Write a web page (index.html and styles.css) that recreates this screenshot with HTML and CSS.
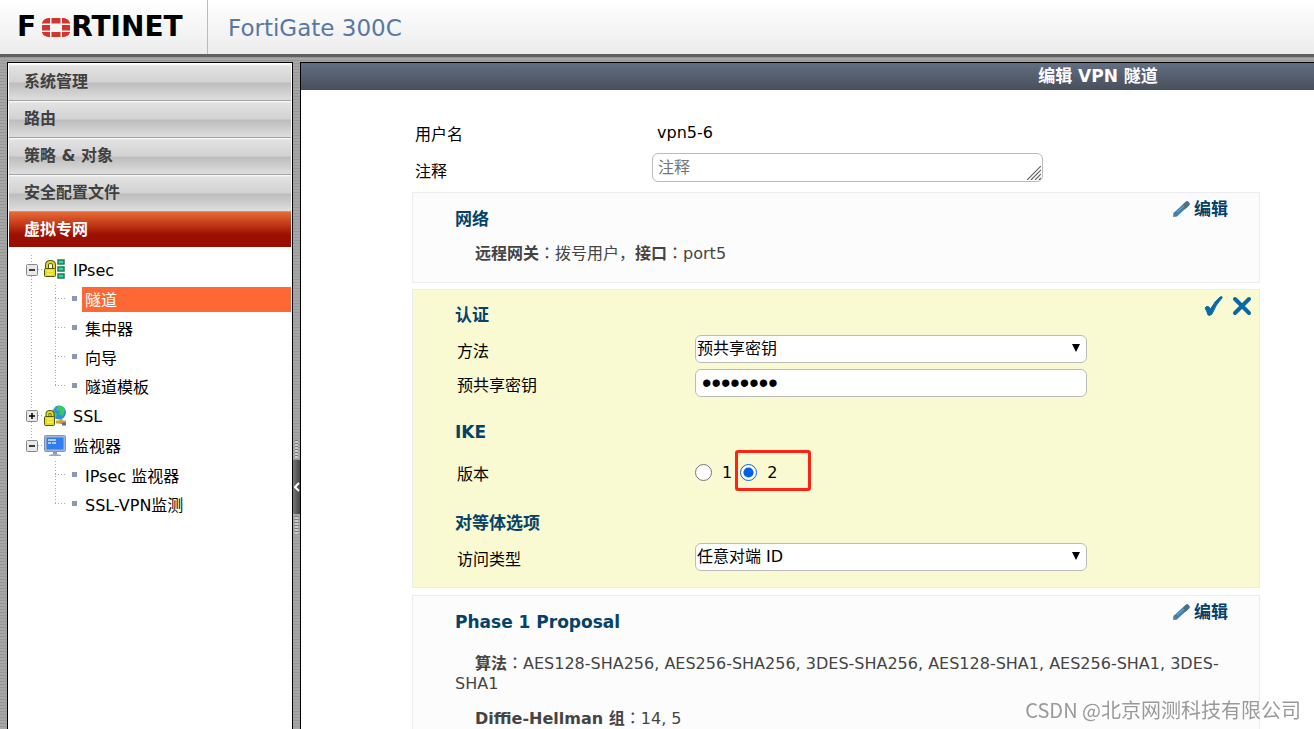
FILE: index.html
```html
<!DOCTYPE html>
<html lang="zh-CN">
<head>
<meta charset="utf-8">
<title>FortiGate 300C</title>
<link rel="stylesheet" href="styles.css">
</head>
<body>
<header class="topbar">
  <div class="logo" aria-label="Fortinet">
    <span>F</span>
    <svg class="logo-mark" viewBox="0 0 28 19" aria-hidden="true">
      <path fill="#d23530" d="M0 5.500V5Q1 1 6 0H8V5.500zM9.500 0h9v5.500h-9zM20 0h2q5 1 6 5v.5H20zM0 7h8v5.500H0zM20 7h8v5.500h-8zM0 14h8v5H6Q1 18 0 14.500zM9.500 14h9v5h-9zM20 14h8v.5q-1 3.500-6 4.500h-2z"/>
    </svg>
    <span>RTINET</span>
  </div>
  <h1 class="model">FortiGate 300C</h1>
</header>
<div class="workspace">
  <nav class="sidebar">
    <div class="menu">
      <button class="menu-item">系统管理</button>
      <button class="menu-item">路由</button>
      <button class="menu-item">策略 &amp; 对象</button>
      <button class="menu-item">安全配置文件</button>
      <button class="menu-item active">虚拟专网</button>
    </div>
    <ul class="tree">
      <li class="branch">
        <div class="node">
          <svg class="toggle" viewBox="0 0 12 12"><rect x=".5" y=".5" width="11" height="11" rx="1" fill="#e9e9e9" stroke="#888"/><path d="M3 6h6" stroke="#000" stroke-width="1.500"/></svg>
          <svg class="node-icon" viewBox="0 0 22 22"><path d="M3 10V6q0-3 3.500-3T10 6v4" fill="none" stroke="#59590a" stroke-width="4"/><path d="M3 10V6q0-3 3.500-3T10 6v4" fill="none" stroke="#dcd82c" stroke-width="2"/><rect x=".5" y="9.500" width="11" height="8" rx="1" fill="#e2dc19" stroke="#55520a"/><path d="M3 12h6M3 15h6" stroke="#fff7a0"/><g fill="#25dcb0" stroke="#26784c" stroke-width="1.500"><rect x="14" y="1" width="6" height="4"/><rect x="14" y="8" width="6" height="4"/><rect x="14" y="15" width="6" height="4"/></g></svg>
          <a href="#">IPsec</a>
        </div>
        <ul class="leaves">
          <li><a href="#" class="current">隧道</a></li>
          <li><a href="#">集中器</a></li>
          <li><a href="#">向导</a></li>
          <li><a href="#">隧道模板</a></li>
        </ul>
      </li>
      <li class="branch">
        <div class="node">
          <svg class="toggle" viewBox="0 0 12 12"><rect x=".5" y=".5" width="11" height="11" rx="1" fill="#e9e9e9" stroke="#888"/><path d="M3 6h6M6 3v6" stroke="#000" stroke-width="1.500"/></svg>
          <svg class="node-icon" viewBox="0 0 22 22"><circle cx="15" cy="7.500" r="7" fill="#2a8fe0"/><path d="M14 1q5-1 7 4l-2 6-4-2 1-3-4-1zM9 5l4 4-1 4-3-3z" fill="#3cc95c"/><path d="M11 2q-3 2-3 5" stroke="#bdeaff" stroke-width="1.500" fill="none"/><path d="M12 17h10M17 14v5" stroke="#d3a326" stroke-width="3"/><path d="M18 19h4" stroke="#596f98" stroke-width="3"/><path d="M3.500 12V9q0-2 2.500-2t2.500 2v3" fill="none" stroke="#59590a" stroke-width="4"/><path d="M3.500 12V9q0-2 2.500-2t2.500 2v3" fill="none" stroke="#e6df1c" stroke-width="2"/><rect x=".5" y="11.500" width="10" height="9" rx="1" fill="#e2dc19" stroke="#55520a"/><path d="M3 14h6M3 17h6" stroke="#fff7a0"/></svg>
          <a href="#">SSL</a>
        </div>
      </li>
      <li class="branch last">
        <div class="node">
          <svg class="toggle" viewBox="0 0 12 12"><rect x=".5" y=".5" width="11" height="11" rx="1" fill="#e9e9e9" stroke="#888"/><path d="M3 6h6" stroke="#000" stroke-width="1.500"/></svg>
          <svg class="node-icon" viewBox="0 0 22 22"><rect x=".5" y=".5" width="21" height="16" rx="1" fill="#a9b5d2" stroke="#8994b5"/><rect x="2.500" y="2.500" width="17" height="12" fill="#2f7df0"/><path d="M4 5h8M4 8h3M8 8h4" stroke="#d7e8ff" stroke-width="1.500"/><path d="M9 17h4v2H9z" fill="#8e9ab8"/><path d="M5 20q6-2 12 0v1H5z" fill="#9ca7c2"/></svg>
          <a href="#">监视器</a>
        </div>
        <ul class="leaves">
          <li><a href="#">IPsec 监视器</a></li>
          <li><a href="#">SSL-VPN监测</a></li>
        </ul>
      </li>
    </ul>
  </nav>
  <div class="splitter">
    <span class="grip"></span>
    <button class="collapse" aria-label="收起"><svg viewBox="0 0 6 10"><path d="M5 1L1 5l4 4" fill="none" stroke="#fff" stroke-width="2"/></svg></button>
    <span class="grip"></span>
  </div>
  <main class="content">
    <h2 class="page-title">编辑 VPN 隧道</h2>
    <form class="form">
      <div class="general">
        <span class="caption">用户名</span>
        <span class="value">vpn5-6</span>
        <label class="caption" for="comment">注释</label>
        <div class="comment-box">
          <textarea id="comment" rows="1" placeholder="注释"></textarea>
          <svg class="resizer" viewBox="0 0 14 14"><path d="M0 14L14 0M4 14L14 4M8 14l6-6M12 14l2-2" stroke="#666" stroke-width="1.200"/></svg>
        </div>
      </div>

      <section class="card">
        <div class="card-head">
          <h3>网络</h3>
          <button type="button" class="edit"><svg viewBox="0 0 17 16"><path d="M3 13L14 3" stroke="#3f82b2" stroke-width="5" stroke-linecap="round"/><path d="M12 5l2-2" stroke="#4b7189" stroke-width="5" stroke-linecap="round"/><path d="M0 16l1-5 4 4z" fill="#537f9b"/><path d="M4 11l7-6" stroke="#76b0d2"/></svg>编辑</button>
        </div>
        <p class="summary"><b>远程网关</b><span class="colon" lang="zh-TW">：</span>拨号用户，<b>接口</b><span class="colon" lang="zh-TW">：</span>port5</p>
      </section>

      <section class="card editing">
        <div class="card-head">
          <h3>认证</h3>
          <div class="confirm">
            <button type="button" aria-label="确定"><svg viewBox="0 0 20 20"><path d="M1 12q2-3 4-1l1.500 2Q11 5 16 1q3-1 2 1-6 6-10 16-2 2-4 1-1-4-3-7z" fill="#0869a8" stroke="#0869a8"/></svg></button>
            <button type="button" aria-label="取消"><svg viewBox="0 0 20 20"><path d="M3 3l14 14M17 3L3 17" stroke="#0869a8" stroke-width="4" stroke-linecap="round"/></svg></button>
          </div>
        </div>
        <div class="row">
          <label for="method">方法</label>
          <div class="select"><select id="method"><option>预共享密钥</option></select></div>
        </div>
        <div class="row">
          <label for="psk">预共享密钥</label>
          <input id="psk" type="password" value="12345678">
        </div>
        <h3>IKE</h3>
        <div class="row version">
          <span>版本</span>
          <div class="radios">
            <label><input type="radio" name="ike">1</label>
            <label class="marked"><input type="radio" name="ike" checked>2</label>
          </div>
        </div>
        <h3>对等体选项</h3>
        <div class="row">
          <label for="peer">访问类型</label>
          <div class="select"><select id="peer"><option>任意对端 ID</option></select></div>
        </div>
      </section>

      <section class="card proposal">
        <div class="card-head">
          <h3>Phase 1 Proposal</h3>
          <button type="button" class="edit"><svg viewBox="0 0 17 16"><path d="M3 13L14 3" stroke="#3f82b2" stroke-width="5" stroke-linecap="round"/><path d="M12 5l2-2" stroke="#4b7189" stroke-width="5" stroke-linecap="round"/><path d="M0 16l1-5 4 4z" fill="#537f9b"/><path d="M4 11l7-6" stroke="#76b0d2"/></svg>编辑</button>
        </div>
        <p class="summary"><b>算法</b><span class="colon" lang="zh-TW">：</span>AES128-SHA256, AES256-SHA256, 3DES-SHA256, AES128-SHA1, AES256-SHA1, 3DES-SHA1</p>
        <p class="summary"><b>Diffie-Hellman 组</b><span class="colon" lang="zh-TW">：</span>14, 5</p>
      </section>
    </form>
  </main>
</div>
<div class="watermark">CSDN @北京网测科技有限公司</div>
</body>
</html>
```
FILE: styles.css
```css
* { box-sizing: border-box; }
body {
  margin: 0;
  height: 100vh;
  display: flex;
  flex-direction: column;
  overflow: hidden;
  font: 16px/20px "DejaVu Sans", "Noto Sans CJK SC", sans-serif;
  color: #000;
  background: repeating-linear-gradient(#979797 0 1px, #a6a6a6 1px 3px);
}
button, input, select, textarea { font: inherit; color: inherit; margin: 0; }
button { background: none; border: 0; padding: 0; cursor: pointer; }
a { color: inherit; text-decoration: none; }
ul { list-style: none; margin: 0; padding: 0; }
h1, h2, h3, p { margin: 0; }

.topbar {
  flex: none;
  display: flex;
  height: 57px;
  background: linear-gradient(#fff, #ececec);
  border-bottom: 3px solid #606060;
}
.logo {
  display: flex;
  align-items: center;
  width: 208px;
  padding-left: 17px;
  border-right: 1px solid #bbb;
  font-size: 28px;
  font-weight: bold;
}
.logo-mark { width: 28px; height: 19px; margin: 0 1px 0 6px; }
.model {
  padding-left: 20px;
  font-size: 23px;
  font-weight: normal;
  line-height: 56px;
  color: #5579a3;
}

.workspace { flex: 1; display: flex; min-height: 0; padding: 5px 0 0 7px; }
.sidebar {
  flex: none;
  width: 286px;
  padding: 1px 1px 0;
  background: #fff;
  border: 1px solid #000;
  border-bottom: 0;
}
.menu { display: flex; flex-direction: column; }
.menu-item {
  height: 37px;
  padding-left: 15px;
  text-align: left;
  font-weight: bold;
  color: #404040;
  border-bottom: 1px solid #a3a3a3;
  background: linear-gradient(#fff 0, #e2e2e2 2px, #d2d2d2 50%, #bdbdbd 53%, #dedede);
}
.menu-item.active {
  height: 35px;
  color: #fff;
  border: 0;
  background: linear-gradient(#e66a38, #c8401c 30%, #9b1000 65%, #960d00);
}
.tree { padding-top: 8px; }
.branch {
  padding-left: 17px;
  background: repeating-linear-gradient(#aaa 0 1px, #fff 1px 3px) 22px 0 / 1px 100% no-repeat;
}
.branch.last { background-size: 1px 12px; }
.node {
  display: flex;
  align-items: center;
  height: 30px;
  background: repeating-linear-gradient(90deg, #aaa 0 1px, #fff 1px 3px) 12px 14px / 6px 1px no-repeat;
}
.node a { padding-top: 2px; }
.toggle { width: 12px; height: 12px; margin-right: 6px; }
.node-icon { width: 22px; height: 22px; margin-right: 7px; }
.leaves { margin-left: 29px; }
.leaves li {
  height: 29px;
  padding: 2px 0 2px 27px;
  background:
    linear-gradient(#8d97b2, #8d97b2) 17px 11px / 5px 5px no-repeat,
    repeating-linear-gradient(#aaa 0 1px, transparent 1px 3px) 0 0 / 1px 100% no-repeat,
    repeating-linear-gradient(90deg, #aaa 0 1px, transparent 1px 3px) 0 13px / 12px 1px no-repeat;
}
.leaves li:last-child { background-size: 5px 5px, 1px 14px, 12px 1px; }
.leaves a { display: block; padding: 2px 0 0 3px; line-height: 23px; }
.leaves .current { color: #fff; background: #ff6735; }

.splitter {
  flex: none;
  width: 7px;
  display: flex;
  flex-direction: column;
  align-items: center;
  padding-top: 376px;
}
.grip { width: 3px; height: 18px; margin: 2px 0; background: repeating-linear-gradient(#777 0 1px, #ccc 1px 3px); }
.collapse {
  width: 7px;
  height: 54px;
  display: flex;
  align-items: center;
  justify-content: center;
  background: linear-gradient(90deg, #777, #444);
}
.collapse svg { width: 6px; height: 10px; }

.content {
  flex: 1;
  min-width: 0;
  overflow: hidden;
  background: #fff;
  border: solid #000;
  border-width: 1px 0 0 1px;
}
.page-title {
  padding-left: 581px;
  text-align: center;
  white-space: nowrap;
  font-size: 17px;
  line-height: 27px;
  color: #fff;
  background: linear-gradient(#626e82, #484f5b);
}
.form { padding: 30px 54px 0 111px; }
.general {
  display: grid;
  grid-template-columns: 240px 391px;
  row-gap: 7px;
  margin-bottom: 5px;
}
.caption { padding-left: 3px; line-height: 30px; }
.value { padding-left: 5px; line-height: 26px; }
.comment-box { position: relative; display: flex; margin-top: -4px; height: 29px; }
.comment-box textarea {
  width: 100%;
  padding: 4px 5px;
  line-height: 20px;
  border: 1px solid #bbb;
  border-radius: 6px;
  resize: none;
  overflow: hidden;
}
.comment-box textarea::placeholder { color: #757575; }
.resizer { position: absolute; right: 2px; bottom: 2px; width: 14px; height: 14px; }

.card {
  margin-bottom: 6px;
  padding: 6px 31px 18px 42px;
  background: #fcfcfc;
  border: 1px solid #ececec;
}
.card-head { display: flex; justify-content: space-between; align-items: flex-start; }
.card h3 { font-size: 17px; line-height: 20px; color: #04426a; }
.card-head h3 { margin-top: 10px; }
.edit {
  display: flex;
  align-items: center;
  gap: 4px;
  font-size: 17px;
  font-weight: bold;
  line-height: 20px;
  color: #04426a;
}
.edit svg { width: 17px; height: 16px; }
.summary { margin-top: 15px; text-indent: 20px; color: #444; }
.colon { font-family: "Noto Sans CJK TC", sans-serif; line-height: 1px; }

.editing { padding: 6px 7px 16px 42px; margin-bottom: 7px; background: #f9f9d2; }
.editing h3 { margin-top: 25px; }
.editing .card-head h3 { margin-top: 9px; }
.editing .card-head { margin-bottom: 10px; }
.confirm { display: flex; gap: 8px; }
.confirm button { width: 20px; height: 20px; }
.confirm svg { display: block; width: 20px; height: 20px; }
.row {
  display: grid;
  grid-template-columns: 238px 392px;
  align-items: center;
  margin-bottom: 6px;
  padding-left: 2px;
}
.row > :first-child { padding-top: 5px; }
.editing .row:last-child { margin-bottom: 0; }
.row select, .row > input {
  width: 100%;
  height: 28px;
  background: #fff;
  border: 1px solid #bbb;
  border-radius: 6px;
}
.row > input { padding: 0 6px; font: 27px/26px "Liberation Sans", sans-serif; }
.select { position: relative; }
.select select { appearance: none; display: block; padding: 0 24px 0 1px; }
.select::after {
  content: "";
  position: absolute;
  top: 9px;
  right: 7px;
  border: solid transparent;
  border-width: 8px 4px 0;
  border-top-color: #000;
  pointer-events: none;
}
.row.version { margin: 18px 0 28px; }
.version + h3 { margin: 0 0 10px; }
.radios { display: flex; gap: 8px; }
.radios label { position: relative; display: flex; align-items: center; gap: 10px; }
.radios input { width: 17px; height: 17px; accent-color: #0062e3; }
.marked::after {
  content: "";
  position: absolute;
  box-sizing: border-box;
  top: -13px;
  left: -5px;
  width: 76px;
  height: 41px;
  border: 3px solid #ff2314;
  border-radius: 3px;
}

.proposal .summary { margin-top: 22px; }
.proposal .summary + .summary { margin-top: 15px; }

.watermark {
  position: fixed;
  right: 13px;
  bottom: 6px;
  font: 20px/26px "Noto Sans CJK SC", sans-serif;
  color: #999;
  text-shadow: 1px 1px 1px #fff;
}
```
